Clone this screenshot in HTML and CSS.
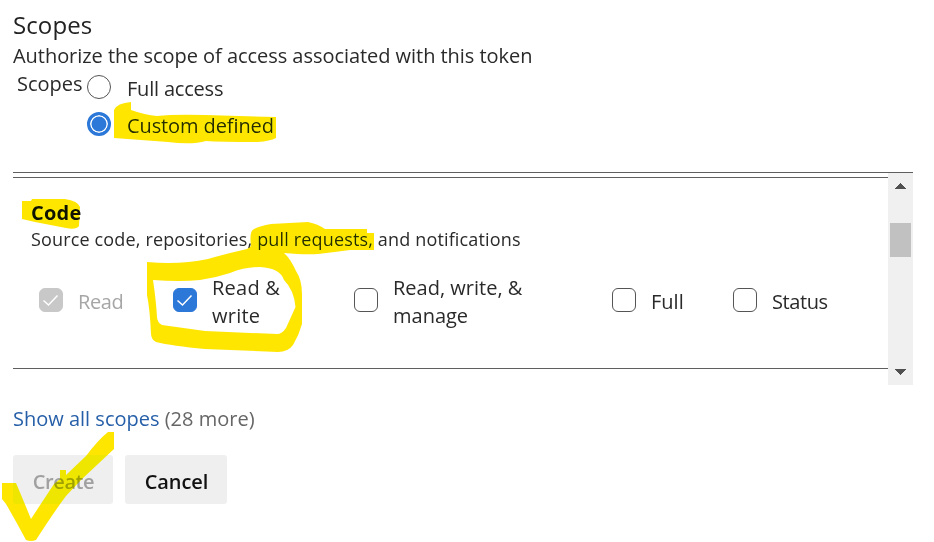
FILE: index.html
```html
<!DOCTYPE html>
<html lang="en">
<head>
<meta charset="utf-8">
<title>Scopes</title>
<link rel="stylesheet" href="styles.css">
</head>
<body>
<main class="form">
  <h2 class="title">Scopes</h2>
  <p class="intro">Authorize the scope of access associated with this token</p>
  <div class="scope-choice">
    <span class="choice-label">Scopes</span>
    <div class="radios">
      <div class="radio-row"><span class="radio"></span><span class="radio-text full">Full access</span></div>
      <div class="radio-row"><span class="radio on"></span><span class="radio-text custom">Custom defined</span></div>
    </div>
  </div>
  <section class="scroller">
    <div class="scope-list">
      <div class="scope">
        <h3 class="scope-name">Code</h3>
        <p class="scope-desc">Source code, repositories, pull requests, and notifications</p>
        <div class="checks">
          <div class="check disabled"><span class="box"><svg viewBox="0 0 24 24"><path d="M4.500 12.500 9.500 17 18.500 7.500"/></svg></span><span class="tight">Read</span></div>
          <div class="check checked"><span class="box"><svg viewBox="0 0 24 24"><path d="M4.500 12.500 9.500 17 18.500 7.500"/></svg></span><span class="wide">Read &amp;<br>write</span></div>
          <div class="check"><span class="box"></span><span>Read, write, &amp;<br>manage</span></div>
          <div class="check"><span class="box"></span><span>Full</span></div>
          <div class="check"><span class="box"></span><span class="tight">Status</span></div>
        </div>
      </div>
    </div>
    <div class="scrollbar">
      <svg class="arrow" viewBox="0 0 11 6" shape-rendering="crispEdges"><path d="M0 6 5.5 0 11 6z"/></svg>
      <span class="thumb"></span>
      <svg class="arrow down" viewBox="0 0 11 6" shape-rendering="crispEdges"><path d="M0 0 5.5 6 11 0z"/></svg>
    </div>
  </section>
  <p class="more"><a class="link">Show all scopes</a> <span class="count">(28 more)</span></p>
  <div class="actions">
    <button class="btn create" disabled>Create</button>
    <button class="btn cancel">Cancel</button>
  </div>
</main>
<svg class="marker" viewBox="0 0 934 542">
  <path d="M114 110Q117 103 131 102V110Q145 115 157 116Q175 114 205 115L276 117V138Q270 141 258 142Q220 142 206 141Q192 145 168 142L114 138Z"/>
  <path d="M22 201H31L32 199H65Q78 201 80 207L79 226Q76 230 66 228L35 222L22 219Z"/>
  <path fill-rule="evenodd" d="M147 262Q180 265 208 259Q225 254 247 249L251 246Q249 231 254 229Q260 226 271 224L308 222Q318 224 325 229H367V233H374V250H350Q335 252 318 254Q305 255 284 253Q290 258 296 271Q302 280 302 294V324Q299 335 293 345Q288 352 278 352L205 349Q172 346 156 342Q151 339 151 334Q150 310 147 295ZM153 280Q180 282 200 280Q215 278 230 273Q245 267 260 267Q280 268 284 280Q294 290 295.500 307L286 328Q282 334 277 334L205 331L162 325Q157 322 157 317Q156 300 153 280Z"/>
  <path d="M2 483H16Q22 497 31 519Q46 496 54 484L60 479V470H66V475L86 456Q98 440 108 432H114V449L82 479L66 496Q54 512 36 540Q31 542 26 540Q17 523 6 504L2 499Z"/>
</svg>
</body>
</html>
```
FILE: styles.css
```css
* { box-sizing: border-box; margin: 0; padding: 0; }
body { width: 934px; height: 542px; overflow: hidden; position: relative; background: #fff; color: #2a2a2a; font: 20px/28px "Open Sans", "Noto Sans", sans-serif; }
.form { padding: 9px 21px 0 13px; }
.title { font-size: 24px; line-height: 32px; font-weight: 400; height: 32px; letter-spacing: 0.1px; color: #222; }
.intro { white-space: nowrap; padding-top: 1px; letter-spacing: -0.045px; }
.scope-choice { display: flex; height: 102px; padding-left: 4px; }
.choice-label { width: 70px; }
.radios { padding-top: 5px; }
.radio-row { display: flex; height: 37px; }
.radio { width: 24px; height: 24px; margin-right: 16px; border: 1px solid #555; border-radius: 50%; background: #fff; }
.radio.on { border: 3px solid #2b78d8; background: #2b78d8; box-shadow: inset 0 0 0 1.500px #fff; }
.radio-text { white-space: nowrap; }
.full { letter-spacing: -0.2px; }
.custom { letter-spacing: -0.1px; }
.scroller { display: flex; width: 900px; height: 213px; border-top: 1px solid #5f5f5f; }
.scope-list { flex: 1; padding-top: 4px; }
.scope { height: 192px; border-top: 1px solid #5f5f5f; border-bottom: 1px solid #5f5f5f; padding: 21px 0 0 18px; }
.scope-name { font-size: 20px; line-height: 27px; font-weight: 700; color: #111; letter-spacing: 0.2px; }
.scope-desc { font-size: 18px; line-height: 27px; white-space: nowrap; letter-spacing: 0.155px; }
.checks { display: grid; grid-template-columns: 134px 181px 258px 121px auto; padding: 21px 0 0 8px; height: 77px; }
.check { display: flex; align-items: center; white-space: nowrap; }
.box { flex: none; width: 24px; height: 24px; margin: -4px 15px 0 0; border: 1px solid #555; border-radius: 6px; }
.box svg { display: block; width: 24px; height: 24px; margin: -1px; fill: none; stroke: #fff; stroke-width: 1.500; }
.tight { letter-spacing: -0.4px; }
.wide { letter-spacing: 0.25px; }
.checked .box { background: #2b78d8; border-color: #2b78d8; }
.disabled { color: #a6a6a6; }
.disabled .box { background: #c8c8c8; border-color: #c8c8c8; }
.scrollbar { width: 25px; background: #f0f0f0; display: flex; flex-direction: column; align-items: center; padding-top: 10px; }
.arrow { width: 11px; height: 6px; fill: #505050; }
.thumb { width: 21px; height: 34px; margin-top: 34px; background: #c1c1c1; }
.down { margin-top: 112px; }
.more { margin-top: 20px; white-space: nowrap; }
.link { color: #265fa8; }
.count { color: #666; }
.actions { display: flex; gap: 12px; margin-top: 22px; }
.btn { height: 49px; border: 0; border-radius: 3px; background: #efefef; font: 600 20px/28px "Open Sans", "Noto Sans", sans-serif; color: #111; padding: 5px 0 0 1px; letter-spacing: -0.1px; }
.create { width: 100px; color: #a0a0a0; letter-spacing: -0.4px; }
.cancel { width: 102px; }
.marker { position: absolute; left: 0; top: 0; width: 934px; height: 542px; fill: #ffe600; mix-blend-mode: darken; pointer-events: none; }
```
